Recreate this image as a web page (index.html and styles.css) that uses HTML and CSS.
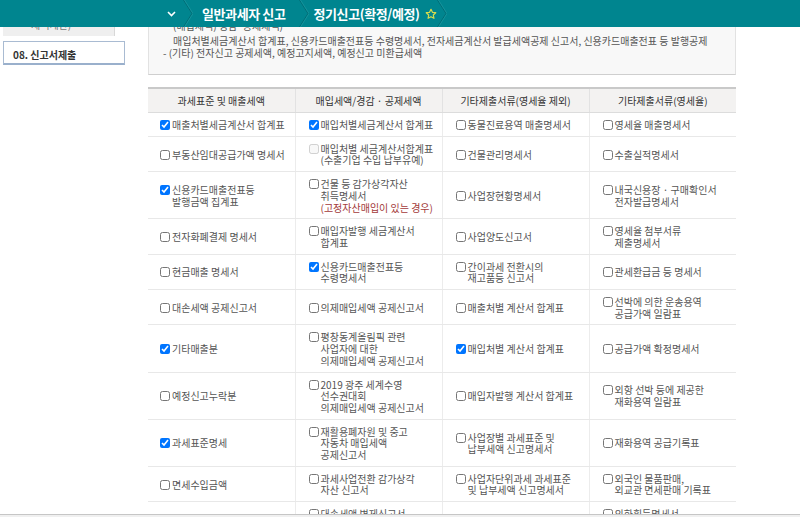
FILE: index.html
```html
<!DOCTYPE html>
<html>
<head>
	<meta charset="utf-8">
	<title>정기신고(확정/예정)</title>
	<link rel="stylesheet" href="styles.css">
</head>
<body>
	<div class="topbar">
		<span class="toggle">
			<svg width="9" height="6" viewBox="0 0 9 6"><polyline points="1,1 4.5,4.5 8,1" fill="none" stroke="#fff" stroke-width="1.6"/></svg>
		</span>
		<svg class="sep" width="10" height="27" viewBox="0 0 10 27"><polyline points="0.5,0 9,13.5 0.5,27" fill="none" stroke="#006c75" stroke-width="1"/><polyline points="1.5,0 10,13.5 1.5,27" fill="none" stroke="#15939c" stroke-width="1"/></svg>
		<span class="crumb">일반과세자 신고</span>
		<svg class="sep sep-wide" width="10" height="27" viewBox="0 0 10 27"><polyline points="0.5,0 9,13.5 0.5,27" fill="none" stroke="#006c75" stroke-width="1"/><polyline points="1.5,0 10,13.5 1.5,27" fill="none" stroke="#15939c" stroke-width="1"/></svg>
		<span class="crumb">정기신고(확정/예정)</span>
		<svg class="star" width="12" height="12" viewBox="0 0 24 24"><path d="M12 2.5l2.9 6.1 6.6.8-4.9 4.6 1.3 6.6L12 17.3l-5.9 3.3 1.3-6.6-4.9-4.6 6.6-.8z" fill="none" stroke="#d7dc4e" stroke-width="2.4" stroke-linejoin="round"/></svg>
		<svg class="sep sep-last" width="10" height="27" viewBox="0 0 10 27"><polyline points="0.5,0 9,13.5 0.5,27" fill="none" stroke="#006c75" stroke-width="1"/><polyline points="1.5,0 10,13.5 1.5,27" fill="none" stroke="#15939c" stroke-width="1"/></svg>
	</div>

	<div class="page">
		<div class="side">
			<div class="side-prev">세액계산)</div>
			<div class="side-current">08. 신고서제출</div>
		</div>

		<div class="main">
			<div class="info">
				<p class="sub first">(매입세액) 경감·공제세액)</p>
				<p class="sub">매입처별세금계산서 합계표, 신용카드매출전표등 수령명세서, 전자세금계산서 발급세액공제 신고서, 신용카드매출전표 등 발행공제</p>
				<p>- (기타) 전자신고 공제세액, 예정고지세액, 예정신고 미환급세액</p>
			</div>

			<table class="forms">
				<thead>
					<tr>
						<th>과세표준 및 매출세액</th>
						<th>매입세액/경감 · 공제세액</th>
						<th>기타제출서류(영세율 제외)</th>
						<th>기타제출서류(영세율)</th>
					</tr>
				</thead>
				<tbody>
					<tr>
						<td><label class="item"><input type="checkbox" checked><span>매출처별세금계산서 합계표</span></label></td>
						<td><label class="item"><input type="checkbox" checked><span>매입처별세금계산서 합계표</span></label></td>
						<td><label class="item"><input type="checkbox"><span>동물진료용역 매출명세서</span></label></td>
						<td><label class="item"><input type="checkbox"><span>영세율 매출명세서</span></label></td>
					</tr>
					<tr>
						<td><label class="item"><input type="checkbox"><span>부동산임대공급가액 명세서</span></label></td>
						<td><label class="item"><input type="checkbox" disabled><span>매입처별 세금계산서합계표<br>(수출기업 수입 납부유예)</span></label></td>
						<td><label class="item"><input type="checkbox"><span>건물관리명세서</span></label></td>
						<td><label class="item"><input type="checkbox"><span>수출실적명세서</span></label></td>
					</tr>
					<tr>
						<td><label class="item"><input type="checkbox" checked><span>신용카드매출전표등<br>발행금액 집계표</span></label></td>
						<td><label class="item"><input type="checkbox"><span>건물 등 감가상각자산<br>취득명세서<br><em class="note">(고정자산매입이 있는 경우)</em></span></label></td>
						<td><label class="item"><input type="checkbox"><span>사업장현황명세서</span></label></td>
						<td><label class="item"><input type="checkbox"><span>내국신용장 · 구매확인서<br>전자발급명세서</span></label></td>
					</tr>
					<tr>
						<td><label class="item"><input type="checkbox"><span>전자화폐결제 명세서</span></label></td>
						<td><label class="item"><input type="checkbox"><span>매입자발행 세금계산서<br>합계표</span></label></td>
						<td><label class="item"><input type="checkbox"><span>사업양도신고서</span></label></td>
						<td><label class="item"><input type="checkbox"><span>영세율 첨부서류<br>제출명세서</span></label></td>
					</tr>
					<tr>
						<td><label class="item"><input type="checkbox"><span>현금매출 명세서</span></label></td>
						<td><label class="item"><input type="checkbox" checked><span>신용카드매출전표등<br>수령명세서</span></label></td>
						<td><label class="item"><input type="checkbox"><span>간이과세 전환시의<br>재고품등 신고서</span></label></td>
						<td><label class="item"><input type="checkbox"><span>관세환급금 등 명세서</span></label></td>
					</tr>
					<tr>
						<td><label class="item"><input type="checkbox"><span>대손세액 공제신고서</span></label></td>
						<td><label class="item"><input type="checkbox"><span>의제매입세액 공제신고서</span></label></td>
						<td><label class="item"><input type="checkbox"><span>매출처별 계산서 합계표</span></label></td>
						<td><label class="item"><input type="checkbox"><span>선박에 의한 운송용역<br>공급가액 일람표</span></label></td>
					</tr>
					<tr>
						<td><label class="item"><input type="checkbox" checked><span>기타매출분</span></label></td>
						<td><label class="item"><input type="checkbox"><span>평창동계올림픽 관련<br>사업자에 대한<br>의제매입세액 공제신고서</span></label></td>
						<td><label class="item"><input type="checkbox" checked><span>매입처별 계산서 합계표</span></label></td>
						<td><label class="item"><input type="checkbox"><span>공급가액 확정명세서</span></label></td>
					</tr>
					<tr>
						<td><label class="item"><input type="checkbox"><span>예정신고누락분</span></label></td>
						<td><label class="item"><input type="checkbox"><span>2019 광주 세계수영<br>선수권대회<br>의제매입세액 공제신고서</span></label></td>
						<td><label class="item"><input type="checkbox"><span>매입자발행 계산서 합계표</span></label></td>
						<td><label class="item"><input type="checkbox"><span>외항 선박 등에 제공한<br>재화용역 일람표</span></label></td>
					</tr>
					<tr>
						<td><label class="item"><input type="checkbox" checked><span>과세표준명세</span></label></td>
						<td><label class="item"><input type="checkbox"><span>재활용폐자원 및 중고<br>자동차 매입세액<br>공제신고서</span></label></td>
						<td><label class="item"><input type="checkbox"><span>사업장별 과세표준 및<br>납부세액 신고명세서</span></label></td>
						<td><label class="item"><input type="checkbox"><span>재화용역 공급기록표</span></label></td>
					</tr>
					<tr>
						<td><label class="item"><input type="checkbox"><span>면세수입금액</span></label></td>
						<td><label class="item"><input type="checkbox"><span>과세사업전환 감가상각<br>자산 신고서</span></label></td>
						<td><label class="item"><input type="checkbox"><span>사업자단위과세 과세표준<br>및 납부세액 신고명세서</span></label></td>
						<td><label class="item"><input type="checkbox"><span>외국인 물품판매,<br>외교관 면세판매 기록표</span></label></td>
					</tr>
					<tr>
						<td></td>
						<td><label class="item"><input type="checkbox"><span>대손세액 변제신고서</span></label></td>
						<td></td>
						<td><label class="item"><input type="checkbox"><span>외화획득명세서</span></label></td>
					</tr>
				</tbody>
			</table>
		</div>
	</div>

	<div class="bottombar"></div>
</body>
</html>
```

FILE: styles.css
```css
body {
	margin: 0;
	font-family: "Noto Sans CJK KR", "Noto Sans", sans-serif;
	font-size: 10px;
	color: #555;
	background-color: #fff;
}

.topbar {
	position: fixed;
	top: 0;
	left: 0;
	right: 0;
	height: 27px;
	background-color: #00858f;
	display: flex;
	align-items: center;
	padding-left: 167px;
	z-index: 10;
}

.toggle {
	display: flex;
	width: 9px;
	margin-right: 7px;
}

.sep {
	display: block;
	margin-right: 9px;
}

.sep-wide {
	margin-left: 14px;
	margin-right: 4px;
}

.sep-last {
	margin-left: 0;
}

.crumb {
	color: #fff;
	font-size: 13px;
	font-weight: bold;
	letter-spacing: -0.4px;
}

.star {
	display: block;
	margin-left: 5px;
}

.page {
	display: flex;
	align-items: flex-start;
}

.side {
	width: 148px;
	flex: none;
	padding-left: 3px;
	box-sizing: border-box;
}

.side-prev {
	width: 112px;
	height: 36px;
	box-sizing: border-box;
	background-color: #efefef;
	border-right: 1px solid #d8d8d8;
	padding: 17px 0 0 28px;
	color: #777;
	font-size: 10px;
}

.side-current {
	margin-top: 5px;
	width: 122px;
	height: 24px;
	box-sizing: border-box;
	border: 1px solid #a9bbd2;
	border-bottom: 2px solid #9ab0cc;
	padding: 5px 0 0 9px;
	font-size: 10px;
	font-weight: bold;
	color: #333;
}

.main {
	width: 588px;
	flex: none;
}

.info {
	height: 75px;
	box-sizing: border-box;
	background-color: #f8f8f8;
	border: 1px solid #e2e2e2;
	border-top: none;
	border-bottom-color: #cfcfcf;
	padding: 20px 0 0 14px;
	color: #555;
}

.info p {
	margin: 0;
	line-height: 12.6px;
}

.info .sub {
	padding-left: 10px;
}

.info .first {
	margin-bottom: 2px;
}

.forms {
	margin-top: 12px;
	width: 588px;
	border-collapse: collapse;
	table-layout: fixed;
}

.forms th {
	height: 23px;
	padding: 0;
	background-color: #f3f2f1;
	border-top: 2px solid #c9c9c9;
	border-bottom: 1px solid #dcdcdc;
	border-left: 1px solid #e2e2e2;
	font-weight: normal;
	color: #333;
	text-align: center;
}

.forms td {
	padding: 6px 4px 5px 12px;
	border-bottom: 1px solid #e8e8e8;
	border-left: 1px solid #ececec;
	vertical-align: middle;
	line-height: 11.7px;
}

.forms th:first-child,
.forms td:first-child {
	border-left: none;
}

.forms td + td {
	padding-left: 13px;
}

.item {
	display: flex;
	align-items: flex-start;
	gap: 2px;
}

.item input {
	flex: none;
	width: 10px;
	height: 10px;
	margin: 1px 0 0;
}

.note {
	font-style: normal;
	color: #a33a3a;
}

.bottombar {
	position: fixed;
	left: 0;
	right: 0;
	bottom: 0;
	height: 2px;
	background-color: #f0f0f0;
	border-top: 1px solid #c6c6c6;
}
```
